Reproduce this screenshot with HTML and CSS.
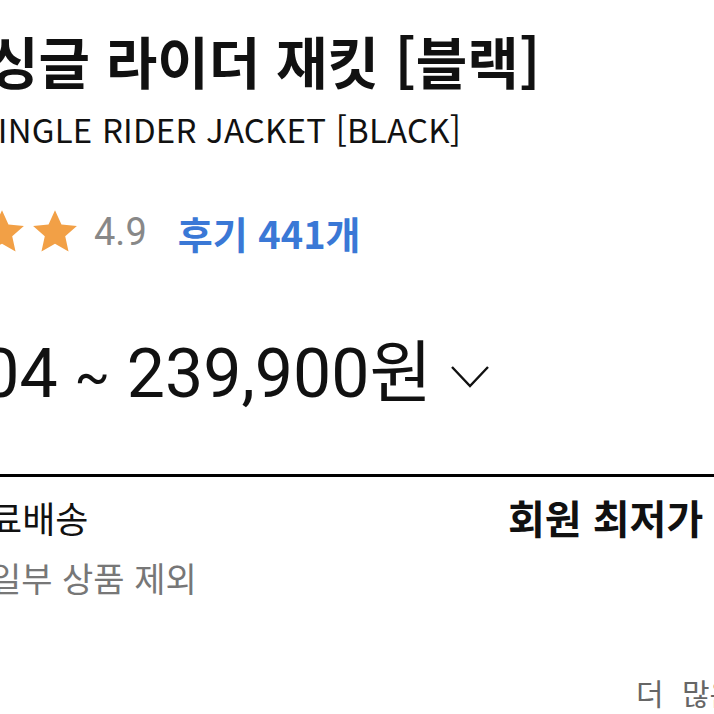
FILE: index.html
```html
<!DOCTYPE html>
<html lang="ko">
<head>
    <meta charset="UTF-8">
    <meta name="viewport" content="width=device-width, initial-scale=1.0">
    <title>싱글 라이더 재킷</title>
    <link rel="stylesheet" href="styles.css">
</head>
<body>

    <div class="product">
        <h1 class="title">싱글 라이더 재킷 [블랙]</h1>
        <p class="subtitle">SINGLE RIDER JACKET [BLACK]</p>

        <div class="rating">
            <div class="stars">
                <svg class="star" viewBox="0 0 24 24"><polygon points="12,1.5 15.1,8.4 22.5,9.1 16.9,14 18.5,21.4 12,17.6 5.5,21.4 7.1,14 1.5,9.1 8.9,8.4"/></svg>
                <svg class="star" viewBox="0 0 24 24"><polygon points="12,1.5 15.1,8.4 22.5,9.1 16.9,14 18.5,21.4 12,17.6 5.5,21.4 7.1,14 1.5,9.1 8.9,8.4"/></svg>
                <svg class="star" viewBox="0 0 24 24"><polygon points="12,1.5 15.1,8.4 22.5,9.1 16.9,14 18.5,21.4 12,17.6 5.5,21.4 7.1,14 1.5,9.1 8.9,8.4"/></svg>
                <svg class="star" viewBox="0 0 24 24"><polygon points="12,1.5 15.1,8.4 22.5,9.1 16.9,14 18.5,21.4 12,17.6 5.5,21.4 7.1,14 1.5,9.1 8.9,8.4"/></svg>
                <svg class="star" viewBox="0 0 24 24"><polygon points="12,1.5 15.1,8.4 22.5,9.1 16.9,14 18.5,21.4 12,17.6 5.5,21.4 7.1,14 1.5,9.1 8.9,8.4"/></svg>
            </div>
            <span class="score">4.9</span>
            <a class="reviews" href="#">후기 441개</a>
        </div>

        <div class="price">
            <span class="amount">159,104 <span class="tilde">~</span> 239,900원</span>
            <svg class="chevron" width="38" height="22" viewBox="0 0 38 22">
                <polyline points="1,1 19,20 37,1" fill="none" stroke="#111" stroke-width="2.4"/>
            </svg>
        </div>
    </div>

    <hr class="divider">

    <div class="info">
        <div class="info-col">
            <div class="info-head">무료배송</div>
            <div class="info-sub">일부 상품 제외</div>
        </div>
        <div class="info-col">
            <div class="info-head bold">회원 최저가 확인</div>
        </div>
    </div>

    <div class="more">더 많은 혜택</div>

</body>
</html>
```

FILE: styles.css
```css
body {
    margin: 0;
    overflow: hidden;
    font-family: "Noto Sans CJK KR", "Noto Sans", sans-serif;
    color: #111;
    background: #fff;
}

.product {
    white-space: nowrap;
}

.title {
    font-size: 56px;
    font-weight: 700;
    margin: 0 0 0 -13px;
    padding-top: 18px;
    line-height: 84px;
}

.subtitle {
    font-size: 33px;
    letter-spacing: 0.2px;
    margin: 5px 0 0 -22px;
    line-height: 44px;
}

.rating {
    display: flex;
    align-items: center;
    margin: 51px 0 0 -182px;
    height: 60px;
}

.stars {
    display: flex;
    gap: 3px;
}

.star {
    width: 50px;
    height: 50px;
    fill: #f2a046;
}

.score {
    font-family: Roboto, sans-serif;
    font-size: 38px;
    color: #888;
    margin-left: 14px;
}

.reviews {
    font-size: 38px;
    font-weight: 700;
    color: #3a78d6;
    text-decoration: none;
    margin-left: 31px;
}

.price {
    display: flex;
    align-items: center;
    margin: 56px 0 0 -185px;
}

.amount {
    font-family: Roboto, "Noto Sans CJK KR", sans-serif;
    font-size: 68px;
    font-weight: 400;
}

.tilde {
    font-size: 52px;
    vertical-align: 3px;
}

.chevron {
    margin-left: 19px;
    margin-top: 18px;
}

.divider {
    border: none;
    border-top: 3px solid #000;
    margin: 57px 0 0;
}

.info {
    display: grid;
    grid-template-columns: 508px 1fr;
    margin-top: 14px;
    white-space: nowrap;
}

.info-head {
    font-size: 36px;
    line-height: 52px;
    margin-left: -44px;
}

.info-head.bold {
    font-size: 40px;
    font-weight: 700;
    margin-left: 0;
}

.info-sub {
    font-size: 34px;
    color: #777;
    line-height: 48px;
    margin: 11px 0 0 -10px;
}

.more {
    margin: 68px 0 0 636px;
    font-size: 30px;
    line-height: 44px;
    color: #666;
    word-spacing: 10px;
    white-space: nowrap;
}
```
